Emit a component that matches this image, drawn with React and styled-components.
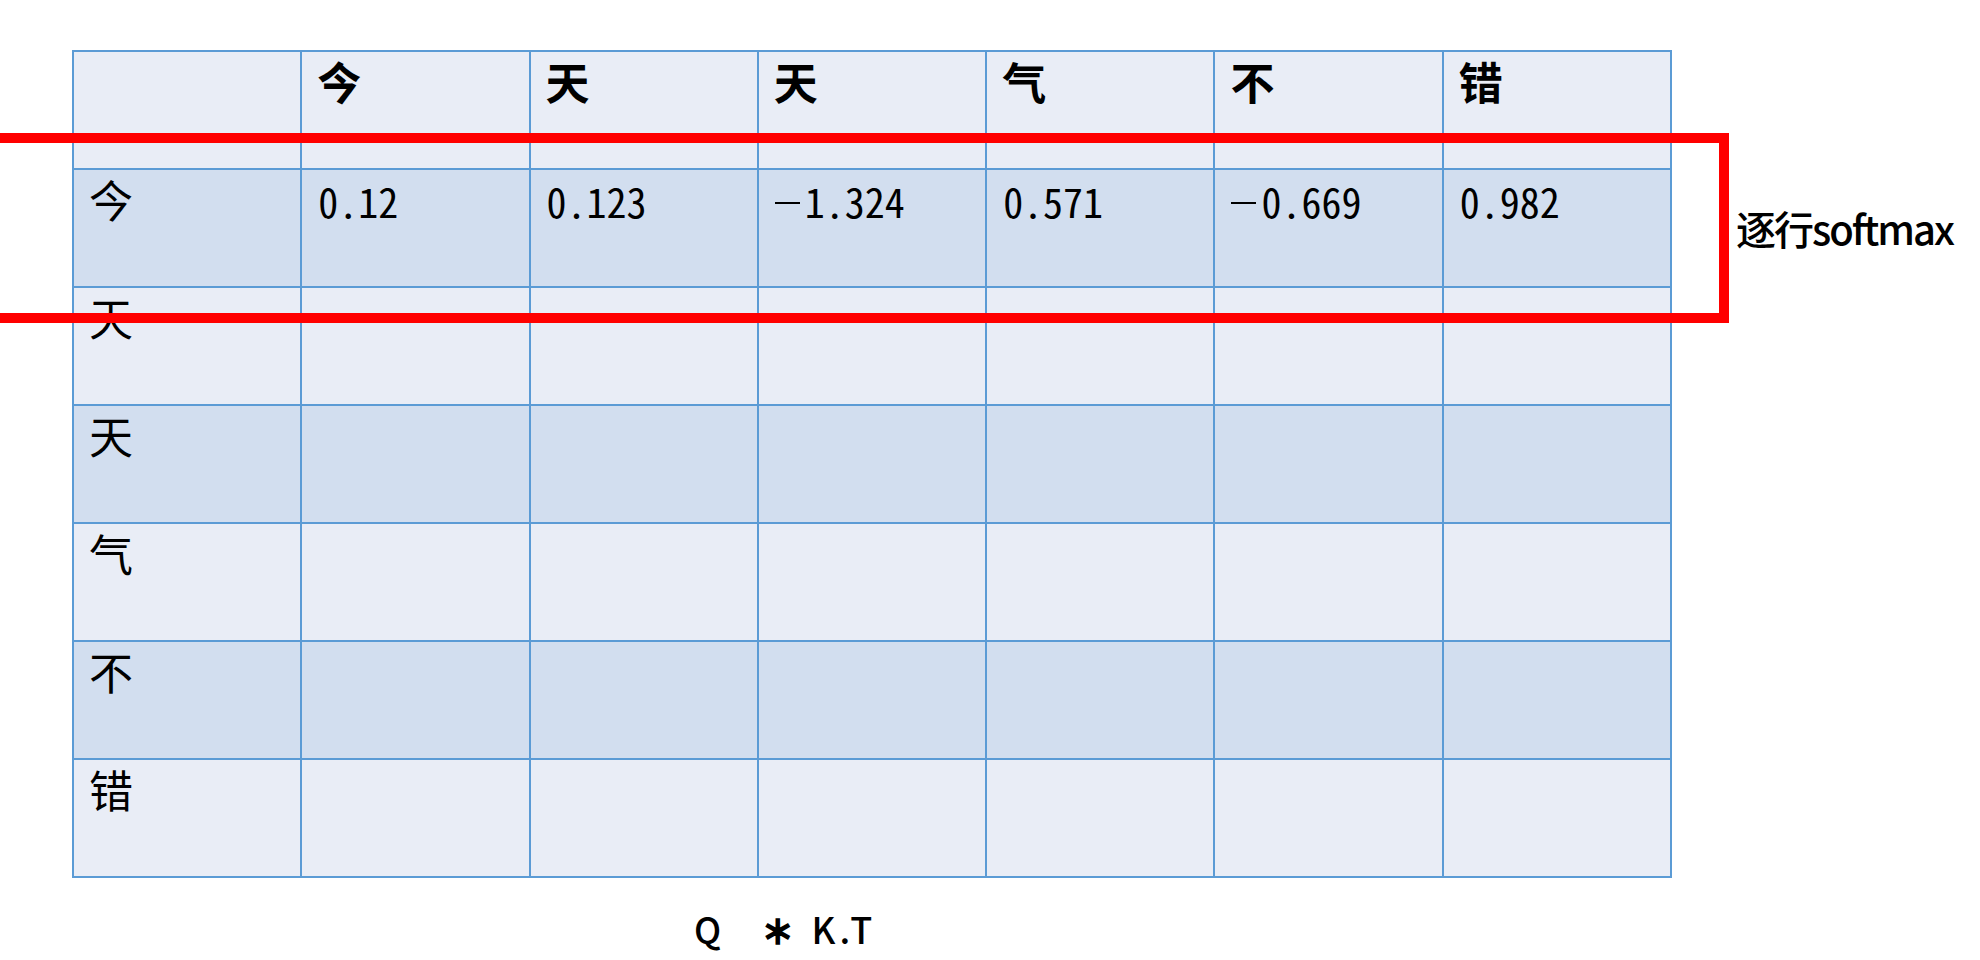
import React from 'react';
import styled, { createGlobalStyle } from 'styled-components';

const GlobalStyle = createGlobalStyle`
	html, body {
		margin: 0;
		padding: 0;
		background: #ffffff;
	}
	body {
		font-family: 'Noto Sans CJK SC', 'Noto Sans', sans-serif;
		color: #000000;
	}
`;

const Page = styled.div`
	position: relative;
	width: 1980px;
	height: 960px;
	overflow: hidden;
	display: flex;
	flex-direction: column;
	padding: 50px 0 0 72px;
	box-sizing: border-box;
`;

const Grid = styled.table`
	border-collapse: collapse;
	table-layout: fixed;
	width: 1600px;
`;

const Row = styled.tr`
	height: 118px;
	background-color: ${p => (p.$band ? '#d2deef' : '#e9edf6')};
`;

const Cell = styled.td`
	border: 2px solid #5b9bd5;
	padding: 0 15px;
	vertical-align: top;
	text-align: left;
	font-size: 44px;
	line-height: 58px;
	font-weight: ${p => (p.$head ? 700 : 400)};
`;

const Num = styled.span`
	display: inline-block;
	padding-left: 1px;
	font-size: 40px;
	font-feature-settings: 'hwid';
	font-weight: 400;
`;

// long dash drawn as a bar, the font's minus is too short
const Minus = styled.span`
	display: inline-block;
	width: 25px;
	height: 2px;
	margin: 0 5px 8px 0;
	vertical-align: middle;
	background: #000000;
`;

const Caption = styled.div`
	margin: 24px 0 0 622px;
	font-size: 36px;
	font-weight: 500;
	letter-spacing: 4px;
	white-space: pre;
	line-height: 50px;
`;

const Star = styled.span`
	font-weight: 900;
	font-size: 40px;
`;

const Highlight = styled.div`
	position: absolute;
	left: -20px;
	top: 133px;
	display: flex;
	align-items: center;
	gap: 7px;
`;

const Frame = styled.div`
	width: 1749px;
	height: 190px;
	box-sizing: border-box;
	border: 10px solid #ff0000;
`;

const Label = styled.div`
	font-size: 40px;
	font-weight: 500;
	letter-spacing: -2px;
	line-height: 48px;
`;

const tokens = ['今', '天', '天', '气', '不', '错'];
const firstRow = [0.12, 0.123, -1.324, 0.571, -0.669, 0.982];

const Value = ({ v }) => (
	<Num>
		{v < 0 ? <Minus /> : null}
		{String(Math.abs(v))}
	</Num>
);

export default function App() {
	return (
		<Page>
			<GlobalStyle />
			<Grid>
				<tbody>
					<Row>
						<Cell $head />
						{tokens.map((t, i) => (
							<Cell $head key={i}>{t}</Cell>
						))}
					</Row>
					{tokens.map((t, r) => (
						<Row key={r} $band={r % 2 === 0}>
							<Cell>{t}</Cell>
							{tokens.map((_, c) => (
								<Cell key={c}>
									{r === 0 ? <Value v={firstRow[c]} /> : null}
								</Cell>
							))}
						</Row>
					))}
				</tbody>
			</Grid>
			<Caption>
				{'Q   '}
				<Star>∗</Star>
				{' K.T'}
			</Caption>
			<Highlight>
				<Frame />
				<Label>逐行softmax</Label>
			</Highlight>
		</Page>
	);
}
